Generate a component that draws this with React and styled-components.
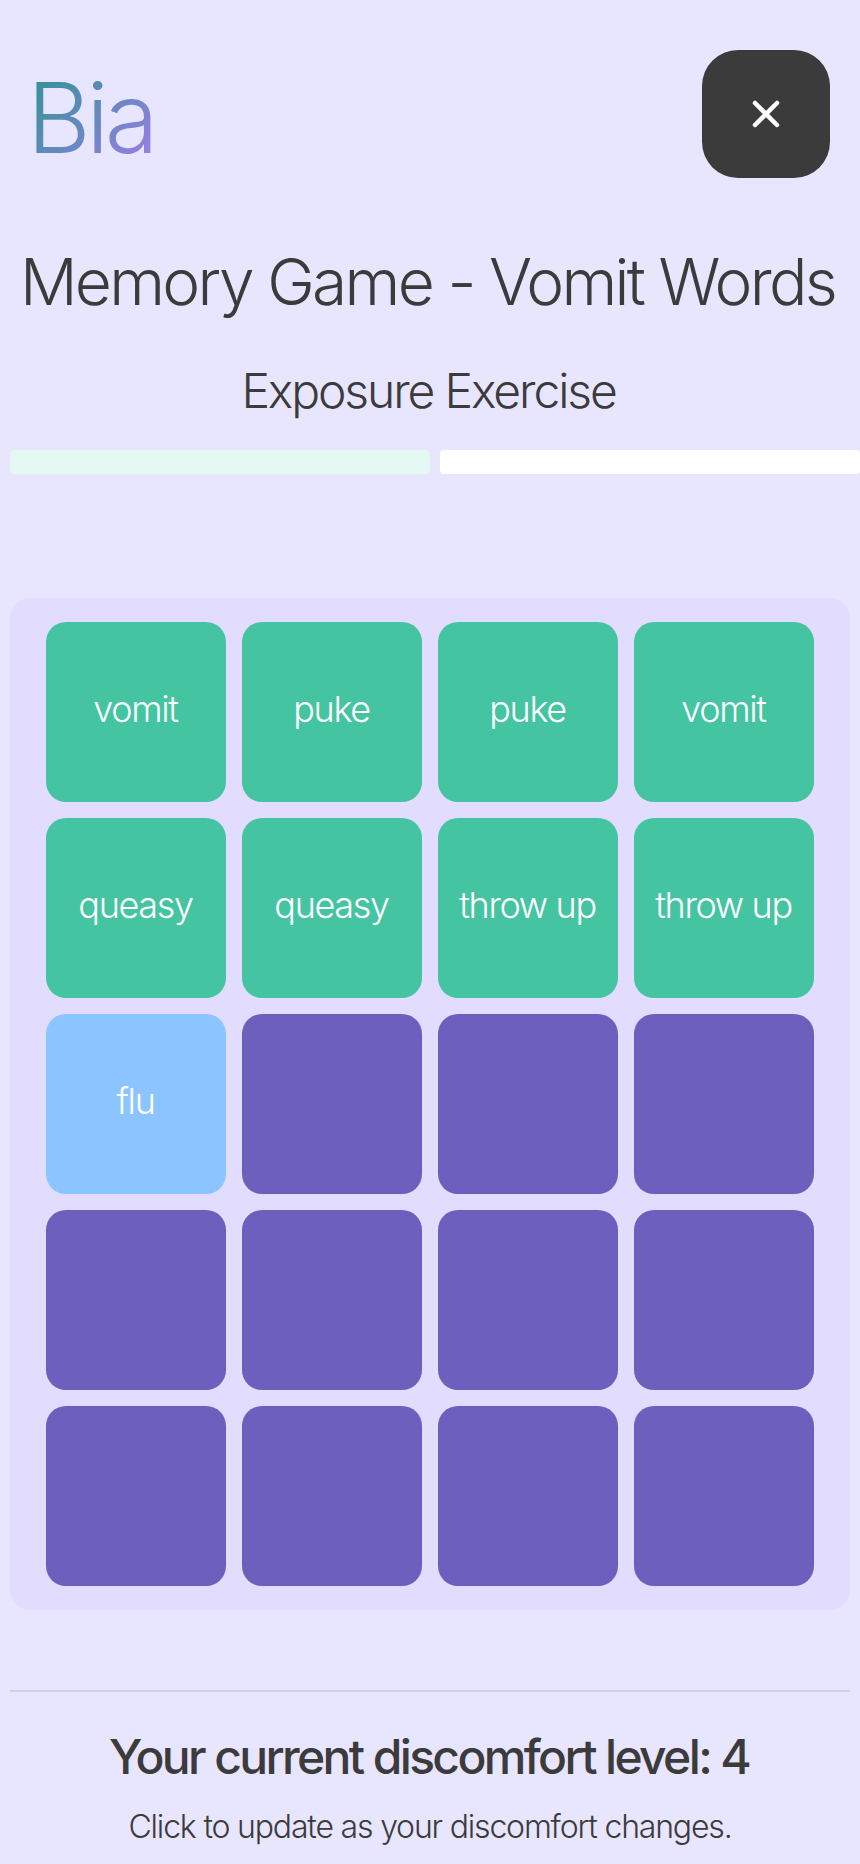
import React from 'react'
import styled, { createGlobalStyle } from 'styled-components'

const GlobalStyle = createGlobalStyle`
  html, body {
    margin: 0;
    padding: 0;
    background: #e8e5ff;
    overflow: hidden;
  }
  * { box-sizing: border-box; }
`

const Page = styled.div`
  width: 860px;
  height: 1864px;
  overflow: hidden;
  padding: 50px 0 0 10px;
  font-family: Inter, "Noto Sans", sans-serif;
  color: #3b3b3b;
`

const Header = styled.header`
  width: 840px;
  display: flex;
  justify-content: space-between;
  align-items: flex-start;
  padding: 0 20px 0 17px;
`

const Logo = styled.div`
  font-size: 98px;
  font-weight: 350;
  line-height: 120px;
  padding-top: 8px;
  letter-spacing: -0.045em;
  background: linear-gradient(135deg, #21968a 0%, #9180de 85%);
  -webkit-background-clip: text;
  background-clip: text;
  color: transparent;
`

const CloseButton = styled.button`
  width: 128px;
  height: 128px;
  border: 0;
  border-radius: 36px;
  background: #3b3b3b;
  display: flex;
  align-items: center;
  justify-content: center;
  padding: 0;
`

const Title = styled.h1`
  width: 840px;
  margin: 68px 0 0;
  padding-right: 5px;
  font-size: 64px;
  line-height: 72px;
  font-weight: 350;
  letter-spacing: -0.042em;
  text-align: center;
  white-space: nowrap;
`

const Subtitle = styled.h2`
  width: 840px;
  margin: 45px 0 0;
  padding-right: 3px;
  font-size: 48px;
  line-height: 56px;
  font-weight: 350;
  letter-spacing: -0.044em;
  text-align: center;
`

const Progress = styled.div`
  display: flex;
  gap: 10px;
  margin-top: 31px;
`

const ProgressStep = styled.div`
  flex: none;
  width: 420px;
  height: 24px;
  border-radius: 4px;
  background: ${p => p.$done ? '#e3f9f2' : '#ffffff'};
`

const Board = styled.div`
  width: 840px;
  margin-top: 124px;
  padding: 24px 36px;
  border-radius: 20px;
  background: #e2dcff;
  display: grid;
  grid-template-columns: repeat(4, 180px);
  grid-auto-rows: 180px;
  gap: 16px;
`

const cardColors = { matched: '#45c4a2', open: '#8cc4ff', closed: '#6c5fbd' }

const Card = styled.div`
  border-radius: 20px;
  background: ${p => cardColors[p.$state]};
  color: #ffffff;
  font-size: 36px;
  font-weight: 350;
  letter-spacing: -0.0375em;
  display: flex;
  align-items: center;
  justify-content: center;
  padding: 0 1px 6px 0;
  white-space: nowrap;
`

const Footer = styled.footer`
  width: 840px;
  margin-top: 80px;
  border-top: 2px solid #d2cfe6;
  padding-top: 37px;
  text-align: center;
`

const Level = styled.div`
  padding-right: 2px;
  font-size: 48px;
  line-height: 56px;
  font-weight: 500;
  letter-spacing: -0.055em;
`

const Hint = styled.p`
  margin: 24px 0 0;
  font-size: 32px;
  line-height: 36px;
  font-weight: 350;
  letter-spacing: -0.037em;
`

const cards = [
  ['vomit', 'matched'], ['puke', 'matched'], ['puke', 'matched'], ['vomit', 'matched'],
  ['queasy', 'matched'], ['queasy', 'matched'], ['throw up', 'matched'], ['throw up', 'matched'],
  ['flu', 'open'], ['', 'closed'], ['', 'closed'], ['', 'closed'],
  ['', 'closed'], ['', 'closed'], ['', 'closed'], ['', 'closed'],
  ['', 'closed'], ['', 'closed'], ['', 'closed'], ['', 'closed'],
]

export default function App() {
  return (
    <Page>
      <GlobalStyle />
      <Header>
        <Logo>Bia</Logo>
        <CloseButton aria-label="Close">
          <svg width="28" height="28" viewBox="0 0 28 28" fill="none" stroke="#fff" strokeWidth="4.5" strokeLinecap="round">
            <path d="M3 3 L25 25 M25 3 L3 25" />
          </svg>
        </CloseButton>
      </Header>
      <Title>Memory Game - Vomit Words</Title>
      <Subtitle>Exposure Exercise</Subtitle>
      <Progress>
        <ProgressStep $done />
        <ProgressStep />
      </Progress>
      <Board>
        {cards.map(([word, state], i) => (
          <Card key={i} $state={state}>{word}</Card>
        ))}
      </Board>
      <Footer>
        <Level>Your current discomfort level: 4</Level>
        <Hint>Click to update as your discomfort changes.</Hint>
      </Footer>
    </Page>
  )
}
